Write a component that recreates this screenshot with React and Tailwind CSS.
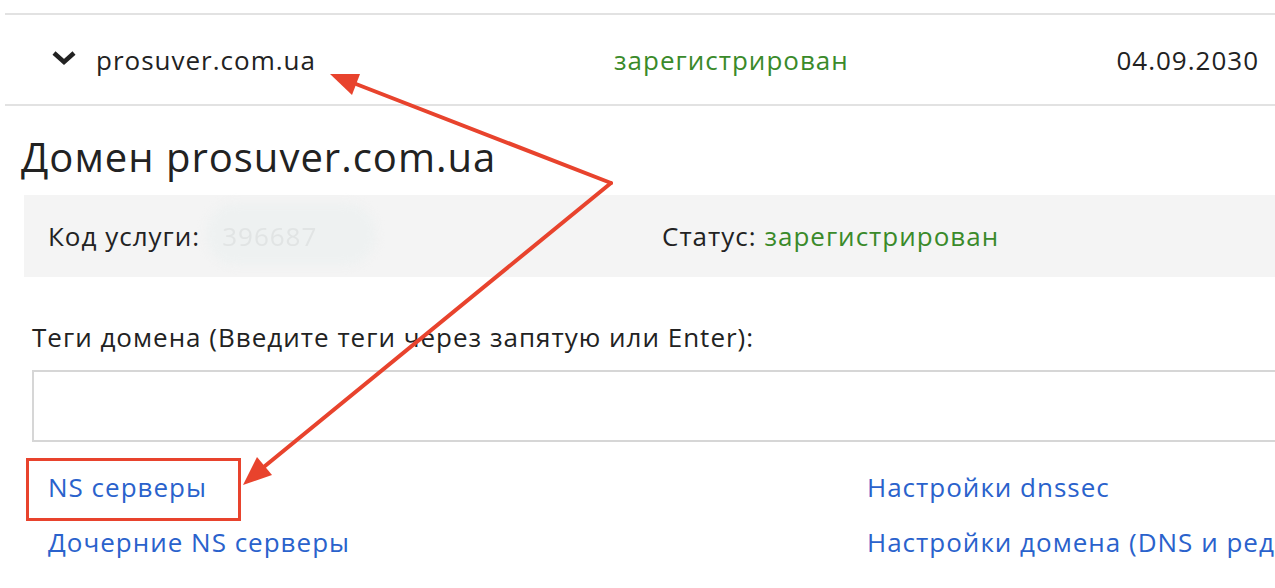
const font = { fontFamily: "'Open Sans', 'Noto Sans', sans-serif" };

function Arrows() {
  return (
    <svg
      className="pointer-events-none absolute left-0 top-0"
      width="1275"
      height="588"
      viewBox="0 0 1275 588"
    >
      <g stroke="#e8432d" strokeWidth="4" strokeLinecap="round" fill="none">
        <line x1="611" y1="183" x2="356" y2="84" />
        <line x1="611" y1="183" x2="265" y2="466" />
      </g>
      <g fill="#e8432d">
        <polygon points="330,74 360,74 352,95" />
        <polygon points="243,485 257,457 272,475" />
      </g>
    </svg>
  );
}

export default function App() {
  return (
    <div className="relative h-[588px] w-[1275px] overflow-hidden bg-white tracking-[1px] text-[#222]" style={font}>
      {/* Domain row */}
      <div className="ml-[5px] mt-[13px] flex h-[93px] items-center border-y-2 border-[#e2e2e2]">
        <div className="flex w-[609px] items-center pl-[46px]">
          <svg width="26" height="16" viewBox="0 0 26 16" className="mt-[-4px]">
            <polyline points="3,3 13,12 23,3" fill="none" stroke="#222" strokeWidth="4.5" strokeLinejoin="miter" />
          </svg>
          <span className="ml-[19px] text-[26px] leading-8">prosuver.com.ua</span>
        </div>
        <span className="flex-1 text-[26px] leading-8 text-[#3a8a2a]">зарегистрирован</span>
        <span className="pr-[16px] text-[26px] leading-8">04.09.2030</span>
      </div>

      {/* Heading */}
      <h1 className="ml-[21px] mt-[27px] text-[40px] leading-[48px]">Домен prosuver.com.ua</h1>

      {/* Info box */}
      <div className="ml-[24px] mt-[14px] flex h-[82px] items-center bg-[#f4f4f4] text-[26px]">
        <div className="flex w-[638px] items-center pl-[24px]">
          <span>Код услуги:</span>
          <span className="relative ml-[22px] inline-block">
            <span className="absolute -left-[16px] -top-[14px] h-[62px] w-[170px] rounded-[30px] bg-[#eef1f1] blur-[4px]" />
            <span className="relative text-[#e1e4e4] blur-[0.6px]">396687</span>
          </span>
        </div>
        <div>
          Статус: <span className="text-[#3a8a2a]">зарегистрирован</span>
        </div>
      </div>

      {/* Tags */}
      <div className="ml-[32px] mt-[44px] text-[26px] leading-8">
        Теги домена (Введите теги через запятую или Enter):
      </div>
      <div className="ml-[32px] mt-[17px] h-[72px] border-2 border-r-0 border-[#d6d6d6]" />

      {/* Links */}
      <div className="mt-[18px] grid grid-cols-[867px_1fr] text-[26px] text-[#2a62cc]">
        <div className="flex h-[55px] items-center pl-[48px]">NS серверы</div>
        <div className="flex h-[55px] items-center whitespace-nowrap">Настройки dnssec</div>
        <div className="flex h-[55px] items-center pl-[48px]">Дочерние NS серверы</div>
        <div className="flex h-[55px] items-center whitespace-nowrap">Настройки домена (DNS и редирект)</div>
      </div>

      {/* Annotation */}
      <div className="absolute left-[26px] top-[458px] h-[63px] w-[215px] border-[3px] border-[#e8432d]" />
      <Arrows />
    </div>
  );
}
